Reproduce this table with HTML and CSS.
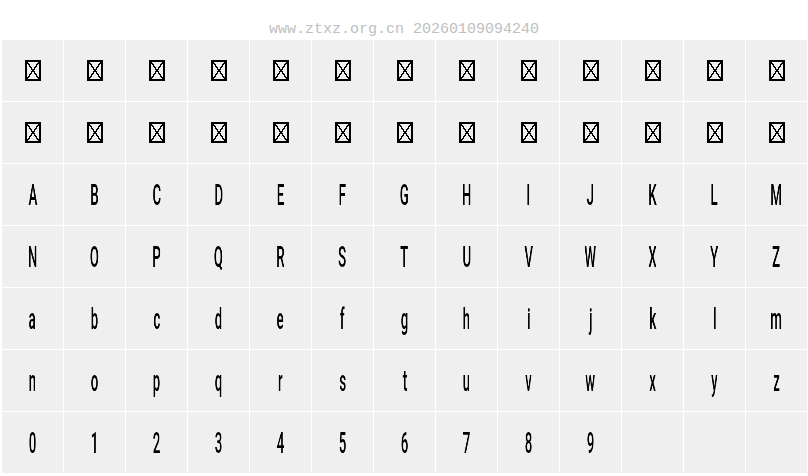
FILE: index.html
```html
<!DOCTYPE html>
<html>
<head>
<meta charset="utf-8">
<link rel="stylesheet" href="styles.css">
</head>
<body>
<div class="header">www.ztxz.org.cn 20260109094240</div>
<div class="grid">
<div class="cell"><span class="tofu"></span></div><div class="cell"><span class="tofu"></span></div><div class="cell"><span class="tofu"></span></div><div class="cell"><span class="tofu"></span></div><div class="cell"><span class="tofu"></span></div><div class="cell"><span class="tofu"></span></div><div class="cell"><span class="tofu"></span></div><div class="cell"><span class="tofu"></span></div><div class="cell"><span class="tofu"></span></div><div class="cell"><span class="tofu"></span></div><div class="cell"><span class="tofu"></span></div><div class="cell"><span class="tofu"></span></div><div class="cell"><span class="tofu"></span></div>
<div class="cell"><span class="tofu"></span></div><div class="cell"><span class="tofu"></span></div><div class="cell"><span class="tofu"></span></div><div class="cell"><span class="tofu"></span></div><div class="cell"><span class="tofu"></span></div><div class="cell"><span class="tofu"></span></div><div class="cell"><span class="tofu"></span></div><div class="cell"><span class="tofu"></span></div><div class="cell"><span class="tofu"></span></div><div class="cell"><span class="tofu"></span></div><div class="cell"><span class="tofu"></span></div><div class="cell"><span class="tofu"></span></div><div class="cell"><span class="tofu"></span></div>
<div class="cell"><span class="g">A</span></div><div class="cell"><span class="g">B</span></div><div class="cell"><span class="g">C</span></div><div class="cell"><span class="g">D</span></div><div class="cell"><span class="g">E</span></div><div class="cell"><span class="g">F</span></div><div class="cell"><span class="g">G</span></div><div class="cell"><span class="g">H</span></div><div class="cell"><span class="g">I</span></div><div class="cell"><span class="g">J</span></div><div class="cell"><span class="g">K</span></div><div class="cell"><span class="g">L</span></div><div class="cell"><span class="g">M</span></div>
<div class="cell"><span class="g">N</span></div><div class="cell"><span class="g">O</span></div><div class="cell"><span class="g">P</span></div><div class="cell"><span class="g">Q</span></div><div class="cell"><span class="g">R</span></div><div class="cell"><span class="g">S</span></div><div class="cell"><span class="g">T</span></div><div class="cell"><span class="g">U</span></div><div class="cell"><span class="g">V</span></div><div class="cell"><span class="g">W</span></div><div class="cell"><span class="g">X</span></div><div class="cell"><span class="g">Y</span></div><div class="cell"><span class="g">Z</span></div>
<div class="cell"><span class="g">a</span></div><div class="cell"><span class="g">b</span></div><div class="cell"><span class="g">c</span></div><div class="cell"><span class="g">d</span></div><div class="cell"><span class="g">e</span></div><div class="cell"><span class="g">f</span></div><div class="cell"><span class="g">g</span></div><div class="cell"><span class="g">h</span></div><div class="cell"><span class="g">i</span></div><div class="cell"><span class="g">j</span></div><div class="cell"><span class="g">k</span></div><div class="cell"><span class="g">l</span></div><div class="cell"><span class="g">m</span></div>
<div class="cell"><span class="g">n</span></div><div class="cell"><span class="g">o</span></div><div class="cell"><span class="g">p</span></div><div class="cell"><span class="g">q</span></div><div class="cell"><span class="g">r</span></div><div class="cell"><span class="g">s</span></div><div class="cell"><span class="g">t</span></div><div class="cell"><span class="g">u</span></div><div class="cell"><span class="g">v</span></div><div class="cell"><span class="g">w</span></div><div class="cell"><span class="g">x</span></div><div class="cell"><span class="g">y</span></div><div class="cell"><span class="g">z</span></div>
<div class="cell"><span class="g">0</span></div><div class="cell"><span class="g">1</span></div><div class="cell"><span class="g">2</span></div><div class="cell"><span class="g">3</span></div><div class="cell"><span class="g">4</span></div><div class="cell"><span class="g">5</span></div><div class="cell"><span class="g">6</span></div><div class="cell"><span class="g">7</span></div><div class="cell"><span class="g">8</span></div><div class="cell"><span class="g">9</span></div><div class="cell"></div><div class="cell"></div><div class="cell"></div>
</div>
</body>
</html>
```
FILE: styles.css
```css
html, body {
  margin: 0;
  padding: 0;
  background: #ffffff;
}

.header {
  height: 40px;
  box-sizing: border-box;
  padding-top: 21px;
  font-family: "Liberation Mono", monospace;
  font-size: 15px;
  line-height: 17px;
  color: #c0c0c0;
  text-align: center;
  white-space: nowrap;
}

.grid {
  display: grid;
  grid-template-columns: repeat(13, 61px);
  grid-auto-rows: 61px;
  gap: 1px;
  margin-left: 2px;
}

.cell {
  background: #efefef;
  display: flex;
  align-items: center;
  justify-content: center;
  font-family: Roboto, sans-serif;
  font-weight: 500;
  font-size: 30px;
  line-height: 61px;
  color: #000;
}

.g {
  display: inline-block;
  height: 61px;
  transform: scaleX(0.44);
  will-change: transform;
}

.tofu {
  display: block;
  width: 16px;
  height: 21px;
  box-sizing: border-box;
  border: 2px solid #000;
  background:
    linear-gradient(to top right, transparent calc(50% - 0.7px), #000 calc(50% - 0.7px), #000 calc(50% + 0.7px), transparent calc(50% + 0.7px)),
    linear-gradient(to bottom right, transparent calc(50% - 0.7px), #000 calc(50% - 0.7px), #000 calc(50% + 0.7px), transparent calc(50% + 0.7px));
}
```
